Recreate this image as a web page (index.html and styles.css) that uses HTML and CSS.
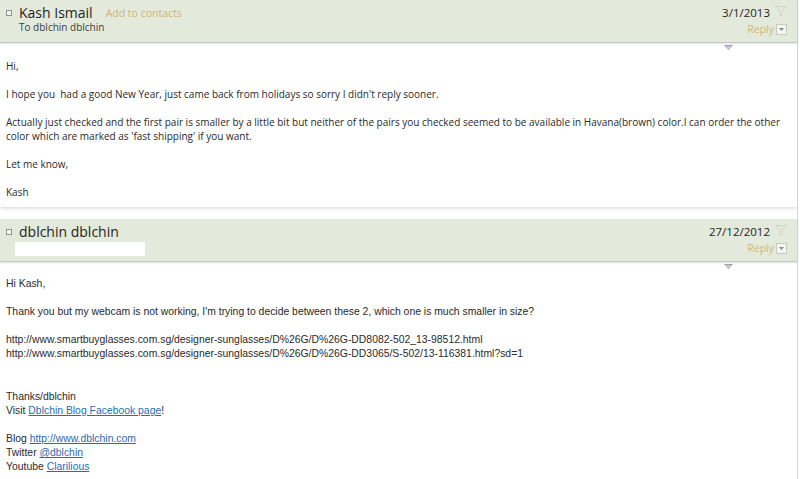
FILE: index.html
```html
<!DOCTYPE html>
<html>
<head>
<meta charset="utf-8">
<link rel="stylesheet" href="styles.css">
</head>
<body>
<div class="page">
  <section class="msg">
    <header class="head">
      <div class="who">
        <div class="line1"><span class="chk"></span><span class="name">Kash Ismail</span><span class="add">Add to contacts</span></div>
        <div class="to">To dblchin dblchin</div>
      </div>
      <div class="meta">
        <div class="dateline"><span class="date">3/1/2013</span><svg class="flag" width="12" height="10" viewBox="0 0 12 10"><path d="M0.5 0.5 L11.5 0.5 L7 5 L7 9.5 L5 9.5 L5 5 Z" fill="none" stroke="#cfd3c8" stroke-width="1"/></svg></div>
        <div class="replyline"><span class="reply">Reply</span><span class="dd"><svg width="5" height="3" viewBox="0 0 5 3"><path d="M0 0 L5 0 L2.5 3Z" fill="#8a8a8a"/></svg></span></div>
      </div>
    </header>
    <div class="tri"><svg width="9" height="5" viewBox="0 0 9 5"><path d="M0 0 L9 0 L4.5 5Z" fill="#9a9ea6"/><path d="M1.5 1 L7.5 1 L4.5 4Z" fill="#c9ccd2"/></svg></div>
    <div class="body segoe">
      <p>Hi,</p>
      <p>I hope you&nbsp; had a good New Year, just came back from holidays so sorry I didn't reply sooner.</p>
      <p>Actually just checked and the first pair is smaller by a little bit but neither of the pairs you checked seemed to be available in Havana(brown) color.I can order the other color which are marked as 'fast shipping' if you want.</p>
      <p>Let me know,</p>
      <p>Kash</p>
    </div>
  </section>
  <section class="msg second">
    <header class="head">
      <div class="who">
        <div class="line1"><span class="chk"></span><span class="name">dblchin dblchin</span></div>
        <div class="blank"></div>
      </div>
      <div class="meta">
        <div class="dateline"><span class="date">27/12/2012</span><svg class="flag" width="12" height="10" viewBox="0 0 12 10"><path d="M0.5 0.5 L11.5 0.5 L7 5 L7 9.5 L5 9.5 L5 5 Z" fill="none" stroke="#cfd3c8" stroke-width="1"/></svg></div>
        <div class="replyline"><span class="reply">Reply</span><span class="dd"><svg width="5" height="3" viewBox="0 0 5 3"><path d="M0 0 L5 0 L2.5 3Z" fill="#8a8a8a"/></svg></span></div>
      </div>
    </header>
    <div class="tri"><svg width="9" height="5" viewBox="0 0 9 5"><path d="M0 0 L9 0 L4.5 5Z" fill="#9a9ea6"/><path d="M1.5 1 L7.5 1 L4.5 4Z" fill="#c9ccd2"/></svg></div>
    <div class="body tahoma">
      <p>Hi Kash,</p>
      <p>Thank you but my webcam is not working, I'm trying to decide between these 2, which one is much smaller in size?</p>
      <p>http://www.smartbuyglasses.com.sg/designer-sunglasses/D%26G/D%26G-DD8082-502_13-98512.html<br>http://www.smartbuyglasses.com.sg/designer-sunglasses/D%26G/D%26G-DD3065/S-502/13-116381.html?sd=1</p>
      <p class="gap2">Thanks/dblchin<br>Visit <a href="#">Dblchin Blog Facebook page</a>!</p>
      <p>Blog <a href="#">http://www.dblchin.com</a><br>Twitter <a href="#">@dblchin</a><br>Youtube <a href="#">Clarilious</a></p>
    </div>
  </section>
</div>
</body>
</html>
```
FILE: styles.css
```css
html, body {
  margin: 0;
  padding: 0;
  background: #ffffff;
}
body {
  width: 800px;
  height: 479px;
  overflow: hidden;
  font-family: "Open Sans", "Liberation Sans", sans-serif;
  color: #222;
}
.page {
  width: 797px;
  border-right: 1px solid #d8d8d8;
}
.msg {
  box-shadow: 0 3px 3px -1px rgba(0,0,0,0.12);
  padding-bottom: 8px;
}
.second {
  margin-top: 12px;
  box-shadow: none;
}
.head {
  background: #e4eadb;
  height: 42px;
  border-bottom: 1px solid #c3c7bd;
  box-shadow: 0 1px 2px rgba(0,0,0,0.12);
  display: flex;
  justify-content: space-between;
}
.who {
  padding: 3px 0 0 6px;
}
.line1 {
  display: flex;
  align-items: center;
  height: 18px;
}
.chk {
  width: 4px;
  height: 4px;
  border: 1px solid #8e9488;
  background: #f6f6f2;
  margin-right: 7px;
  margin-top: 2px;
}
.name {
  font-size: 14px;
  color: #1e1e1e;
}
.add {
  font-size: 10.5px;
  color: #cdb27a;
  margin-left: 13px;
  margin-top: 2px;
}
.to {
  font-size: 10px;
  color: #3c3c3c;
  padding-left: 13px;
  line-height: 13px;
  font-weight: 500;
}
.blank {
  margin: 2px 0 0 9px;
  width: 130px;
  height: 14px;
  background: #fff;
}
.meta {
  padding: 5px 10px 0 0;
  display: flex;
  flex-direction: column;
  align-items: flex-end;
}
.dateline {
  display: flex;
  align-items: center;
  height: 15px;
}
.date {
  font-size: 11.5px;
  color: #1e1e1e;
}
.flag {
  margin-left: 5px;
  margin-top: -4px;
}
.replyline {
  display: flex;
  align-items: center;
  margin-top: 2px;
}
.reply {
  font-size: 10.5px;
  color: #d0b67c;
}
.dd {
  width: 9px;
  height: 9px;
  border: 1px solid #c5c9bf;
  background: #f3f5ef;
  margin-left: 2px;
  display: flex;
  align-items: center;
  justify-content: center;
}
.tri {
  display: flex;
  justify-content: flex-end;
  padding-right: 64px;
  height: 7px;
  padding-top: 2px;
}
.body {
  padding: 7px 0 0 6px;
  color: #2a2a2a;
}
.body p {
  margin: 0 0 14px 0;
}
.body p:last-child {
  margin-bottom: 0;
}
.segoe {
  font-size: 10px;
  line-height: 14px;
}
.tahoma {
  font-family: "Liberation Sans", sans-serif;
  font-size: 10.4px;
  line-height: 14px;
  padding-top: 6px;
}
.tahoma a {
  color: #2b6cb0;
}
.gap2 {
  margin-top: 29px !important;
}
```
